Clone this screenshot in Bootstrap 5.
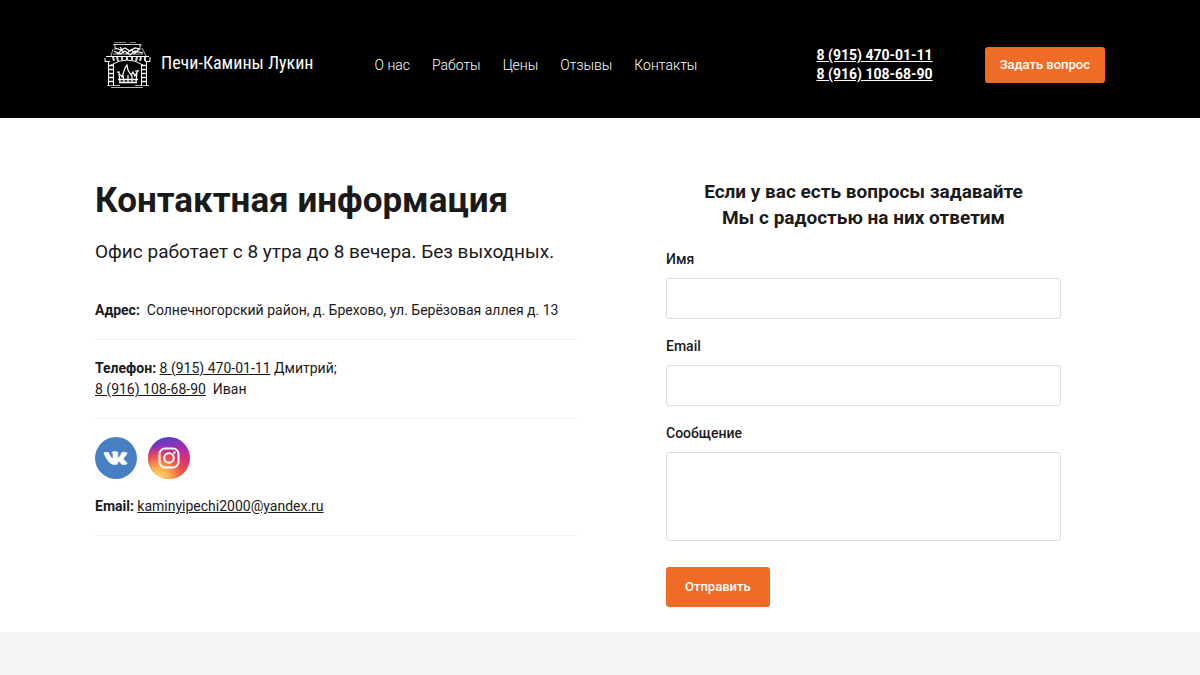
<!DOCTYPE html>
<html lang="ru">
<head>
<meta charset="utf-8">
<meta name="viewport" content="width=device-width, initial-scale=1">
<title>Печи-Камины Лукин — контакты</title>
<link href="https://cdn.jsdelivr.net/npm/bootstrap@5.3.0/dist/css/bootstrap.min.css" rel="stylesheet">
<style>
  body { font-family: Roboto, sans-serif; font-size: 14px; line-height: 21px; color: #1a1a1a; background: #f4f4f4; }
  .page-wrap { max-width: 1034px; }
  .site-header { background: #000; min-height: 118px; }
  .brand-name { font-family: "Roboto Condensed", "Liberation Sans Narrow", Roboto, sans-serif; font-size: 18px; line-height: 24px; color: #fff; }
  .site-menu { gap: 22px; margin-left: 61px; margin-top: 12px; }
  .site-menu .nav-link { color: #fff; font-weight: 300; }
  .header-side { gap: 52px; margin-top: 12px; }
  .header-phones { line-height: 19px; }
  .header-phones a { color: #fff; font-weight: 700; }
  .btn-accent { --bs-btn-color: #fff; --bs-btn-bg: #f06c26; --bs-btn-hover-color: #fff; --bs-btn-hover-bg: #dc5d19; --bs-btn-active-color: #fff; --bs-btn-active-bg: #c95113; --bs-btn-border-width: 0; --bs-btn-border-radius: 3px; --bs-btn-font-size: 13px; --bs-btn-font-weight: 500; }
  .btn-ask { height: 36px; padding: 0 15px; }
  .btn-send { height: 40px; padding: 0 19px; margin-top: 26px; }
  .contacts { padding-top: 61px; padding-bottom: 25px; }
  .contacts .row { --bs-gutter-x: 44px; }
  h1 { font-size: 35px; line-height: 44px; font-weight: 700; margin-bottom: 15px; }
  .hours { font-size: 19px; line-height: 28px; margin-bottom: 16px; }
  .info-item { padding: 18px 0; border-bottom: 1px solid #f2f2f2; }
  .info-item a { color: inherit; }
  .info-item b { font-weight: 700; }
  .socials { gap: 11px; margin-bottom: 17px; }
  .form-side { padding: 0 44px; }
  h2 { font-size: 19px; line-height: 26px; font-weight: 700; margin-bottom: 18px; }
  .form-label { font-weight: 500; margin-bottom: 8px; }
  .form-control { border-color: #dedede; border-radius: 3px; height: 41px; }
  .field + .field { margin-top: 17px; }
  textarea.form-control { height: 89px; resize: none; }
</style>
</head>
<body>
<header class="site-header d-flex align-items-center">
  <div class="container page-wrap d-flex flex-wrap align-items-center">
    <a href="#" class="d-flex align-items-center text-decoration-none gap-2 ps-2 mt-2">
      <svg class="mt-1" width="50" height="48" viewBox="0 0 50 48" fill="none" stroke="#fff" stroke-width="1" aria-hidden="true">
        <!-- chimney and firewood -->
        <path d="M10 3.500H38V5M12 3V9M37 4v5" stroke-opacity=".8"/>
        <path d="M11 1.500h12M27 1.500h6" stroke-opacity=".5"/>
        <path d="M12 7l6 2 4-2 5 3 5-3 5 1M11 10l6 3 5-3 5 4 5-4 8 2M14 13l5-4M23 13l5-4M31 13l5-5M17 6l4 6M28 8l4 5" stroke-width="1.200"/>
        <path d="M10 8l-2 7M39 7l4 8M10 13h30" stroke-opacity=".7"/>
        <!-- mantel -->
        <path d="M3 15.500H46M2 17V20.500H7M42 20.500h5V16M8 24Q24 14 40 24"/>
        <path d="M10 16l1 4M14 16l1 4M19 15v4M24 15v4M29 15v4M34 16l-1 4M38 16l-1 4M42 16v4" stroke-width="2" stroke-opacity=".85"/>
        <!-- brick columns -->
        <path d="M5.500 21V45M10.500 23V45M38.500 23V45M43.500 21V45"/>
        <path d="M5 24.500h6M5 28.500h6M5 32.500h6M5 36.500h6M5 40.500h6M38 24.500h6M38 28.500h6M38 32.500h6M38 36.500h6M38 40.500h6" stroke-width="1.500"/>
        <path d="M4 44.500H17M32 44.500H46M8 46.500H40" stroke-opacity=".7"/>
        <!-- fire and grate -->
        <path d="M15 31l4 5 3-9 2-3 1 5 3 5 2-3 2 4 3-6M14 31h3M32 30h4M16 33l1 8M34 31l-1 10M20 34l1 7M25 34v7M29 34v7" stroke-width="1.200"/>
        <path d="M15 38.500H35M16 41.500H34" stroke-width="1.300"/>
      </svg>
      <span class="brand-name text-nowrap">Печи-Камины Лукин</span>
    </a>
    <nav class="nav site-menu" aria-label="Основное меню">
      <a class="nav-link p-0" href="#">О нас</a>
      <a class="nav-link p-0" href="#">Работы</a>
      <a class="nav-link p-0" href="#">Цены</a>
      <a class="nav-link p-0" href="#">Отзывы</a>
      <a class="nav-link p-0" href="#">Контакты</a>
    </nav>
    <div class="header-side d-flex align-items-center ms-auto">
      <div class="header-phones text-nowrap">
        <a class="d-block" href="tel:+79154700111">8 (915) 470-01-11</a>
        <a class="d-block" href="tel:+79161086890">8 (916) 108-68-90</a>
      </div>
      <button type="button" class="btn btn-accent btn-ask">Задать вопрос</button>
    </div>
  </div>
</header>
<main class="bg-white contacts">
  <div class="container page-wrap">
    <div class="row">
      <section class="col-md-6">
        <h1>Контактная информация</h1>
        <p class="hours">Офис работает с 8 утра до 8 вечера. Без выходных.</p>
        <div class="info-item"><b>Адрес:</b>&nbsp; Солнечногорский район, д. Брехово, ул. Берёзовая аллея д. 13</div>
        <div class="info-item"><b>Телефон:</b> <a href="tel:+79154700111">8 (915) 470-01-11</a> Дмитрий;<br><a href="tel:+79161086890">8 (916) 108-68-90</a>&nbsp; Иван</div>
        <div class="info-item">
          <div class="socials d-flex">
            <a class="d-flex" href="#" aria-label="ВКонтакте">
              <svg width="42" height="42" viewBox="0 0 42 42" aria-hidden="true">
                <circle cx="21" cy="21" r="21" fill="#4680c2"/>
                <path fill="#fff" stroke="#fff" stroke-width=".8" stroke-linejoin="round" d="M20.400 27.400h1.300s.4 0 .6-.3c.2-.2.2-.6.2-.6s0-1.900.8-2.200c.9-.3 2 1.800 3.200 2.600.9.6 1.600.5 1.600.5l2.900-.1s1.500-.1.8-1.300c-.1-.1-.4-.9-2.200-2.500-1.900-1.700-1.600-1.500.6-4.400 1.400-1.800 1.900-2.900 1.700-3.400-.1-.5-1.200-.3-1.200-.3h-3.300s-.5 0-.7.5c0 0-.5 1.400-1.200 2.500-1.500 2.500-2 2.600-2.300 2.500-.6-.4-.5-1.500-.5-2.300 0-2.500.4-3.500-.7-3.800-.4-.1-.7-.1-1.700-.1-1.300 0-2.400 0-3 .3-.4.2-.7.7-.5.700.2 0 .7.1 1 .5.4.5.3 1.700.3 1.700s.2 3.200-.5 3.600c-.5.3-1.200-.3-2.600-2.700-.7-1.200-1.300-2.600-1.300-2.600s-.2-.6-.9-.6h-3.100s-.5 0-.6.200c-.2.2 0 .6 0 .6s2.500 5.700 5.200 8.600c2.600 2.700 5.500 2.500 5.500 2.500z"/>
              </svg>
            </a>
            <a class="d-flex" href="#" aria-label="Instagram">
              <svg width="42" height="42" viewBox="0 0 42 42" aria-hidden="true">
                <defs>
                  <linearGradient id="ig-base" x1=".4" y1="0" x2=".6" y2="1">
                    <stop offset="0" stop-color="#4c42c8"/><stop offset=".3" stop-color="#a32db0"/><stop offset=".65" stop-color="#e0306c"/><stop offset="1" stop-color="#ee5a3c"/>
                  </linearGradient>
                  <radialGradient id="ig-glow" cx=".25" cy="1" r=".8">
                    <stop offset="0" stop-color="#ffdc70"/><stop offset=".35" stop-color="#fbad50"/><stop offset=".7" stop-color="#f05a45" stop-opacity=".8"/><stop offset="1" stop-color="#e0306c" stop-opacity="0"/>
                  </radialGradient>
                </defs>
                <circle cx="21" cy="21" r="21" fill="url(#ig-base)"/>
                <circle cx="21" cy="21" r="21" fill="url(#ig-glow)"/>
                <g fill="none" stroke="#fff" stroke-width="2"><rect x="11.500" y="11.500" width="19" height="19" rx="5.500"/><circle cx="21" cy="21" r="4.800"/></g>
                <circle cx="26.400" cy="15.600" r="1.300" fill="#fff"/>
              </svg>
            </a>
          </div>
          <b>Email:</b> <a href="mailto:kaminyipechi2000@yandex.ru">kaminyipechi2000@yandex.ru</a>
        </div>
      </section>
      <section class="col-md-6">
        <form class="form-side">
          <h2 class="text-center">Если у вас есть вопросы задавайте<br>Мы с радостью на них ответим</h2>
          <div class="field">
            <label class="form-label d-block" for="name">Имя</label>
            <input class="form-control" type="text" id="name">
          </div>
          <div class="field">
            <label class="form-label d-block" for="email">Email</label>
            <input class="form-control" type="email" id="email">
          </div>
          <div class="field">
            <label class="form-label d-block" for="message">Сообщение</label>
            <textarea class="form-control d-block" id="message"></textarea>
          </div>
          <button type="submit" class="btn btn-accent btn-send">Отправить</button>
        </form>
      </section>
    </div>
  </div>
</main>
<script src="https://cdn.jsdelivr.net/npm/bootstrap@5.3.0/dist/js/bootstrap.bundle.min.js"></script>
</body>
</html>
